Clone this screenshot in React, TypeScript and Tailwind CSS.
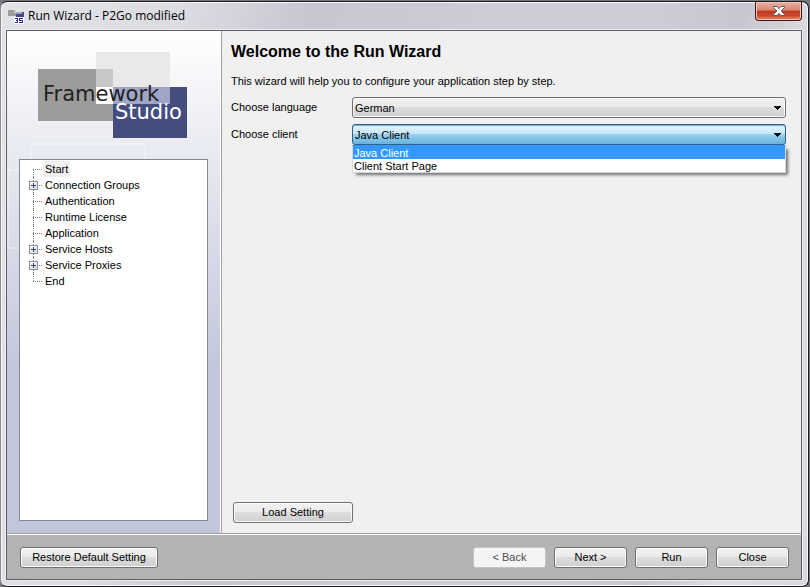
import { useState, type ReactNode } from "react";

type Node = { label: string; expandable?: boolean };

const nodes: Node[] = [
  { label: "Start" },
  { label: "Connection Groups", expandable: true },
  { label: "Authentication" },
  { label: "Runtime License" },
  { label: "Application" },
  { label: "Service Hosts", expandable: true },
  { label: "Service Proxies", expandable: true },
  { label: "End" },
];

const clients = ["Java Client", "Client Start Page"];

function AppIcon() {
  return (
    <svg width="16" height="16" viewBox="0 0 16 16" shapeRendering="crispEdges" aria-hidden="true">
      <rect x="0" y="2" width="8" height="6" fill="#9b9b9b" />
      <rect x="6" y="0" width="8" height="4" fill="#e6e6e8" />
      <rect x="6" y="2" width="2" height="3" fill="#c8c8c8" />
      <rect x="8" y="4" width="8" height="5" fill="#444d7d" />
      <rect x="8" y="4" width="6" height="2" fill="#a0a4c6" />
      <rect x="6" y="9" width="10" height="7" fill="#fff" />
      <path d="M7 10h3v5h-3v-1h2v-1h-1v-1h1v-1h-2zM11 10h4v1h-3v1h3v3h-4v-1h3v-1h-3z" fill="#2e3a78" />
    </svg>
  );
}

function Logo() {
  return (
    <svg width="150" height="86" viewBox="0 0 150 86" role="img" aria-label="Framework Studio">
      <rect x="0" y="17" width="75" height="52" fill="#9c9c9a" />
      <rect x="58" y="0" width="74" height="52" fill="#e9e9e9" />
      <rect x="58" y="17" width="17" height="18" fill="#c8c8c8" />
      <rect x="58" y="35" width="17" height="17" fill="#fff" />
      <rect x="75" y="35" width="74" height="51" fill="#444d7d" />
      <rect x="75" y="35" width="57" height="17" fill="#a0a4c6" />
      <text x="5" y="49" fontSize="21" fill="#222" className="font-['DejaVu_Sans',sans-serif]">
        Framework
      </text>
      <text x="77" y="67" fontSize="21" fill="#fff" className="font-['DejaVu_Sans',sans-serif]">
        Studio
      </text>
    </svg>
  );
}

function PushButton({ children, className = "" }: { children: ReactNode; className?: string }) {
  return (
    <button
      type="button"
      className={`h-[21px] rounded-[3px] border border-[#707070] bg-[linear-gradient(#f2f2f2_0%,#ebebeb_48%,#dddddd_50%,#cfcfcf_100%)] pb-px text-center leading-[18px] shadow-[inset_0_0_0_1px_#fafafa] ${className}`}
    >
      {children}
    </button>
  );
}

function Arrow() {
  return (
    <svg
      width="7"
      height="4"
      viewBox="0 0 7 4"
      shapeRendering="crispEdges"
      aria-hidden="true"
      className="pointer-events-none absolute top-[9px] right-[5px]"
    >
      <path d="M0 0h7v1h-1v1h-1v1h-1v1h-1v-1h-1v-1h-1v-1h-1z" fill="#000" />
    </svg>
  );
}

function TreeRow({ node, first, last }: { node: Node; first: boolean; last: boolean }) {
  return (
    <li className="relative flex h-4 items-center pl-[23px]">
      <span
        className={`absolute left-[13px] border-l border-dotted border-[#808080] ${
          first ? "top-2 bottom-0" : last ? "top-0 bottom-2" : "top-0 bottom-0"
        }`}
      />
      <span className="absolute top-2 left-[13px] w-[9px] border-t border-dotted border-[#808080]" />
      {node.expandable && (
        <button
          type="button"
          aria-label={`Expand ${node.label}`}
          className="absolute top-1 left-[9px] flex size-[9px] items-center justify-center border border-[#919191] bg-linear-to-br from-white to-[#d8d8d8]"
        >
          <svg width="5" height="5" viewBox="0 0 5 5" shapeRendering="crispEdges" aria-hidden="true" className="shrink-0">
            <path d="M2 0h1v2h2v1h-2v2h-1v-2h-2v-1h2z" fill="#2a4a94" />
          </svg>
        </button>
      )}
      <span className={`px-[2px] leading-4 ${first ? "bg-[#f0f0f0]" : ""}`}>{node.label}</span>
    </li>
  );
}

export default function App() {
  const [language, setLanguage] = useState("German");
  const [client, setClient] = useState("Java Client");

  return (
    <div className="flex min-h-screen flex-col bg-[#77777b] pt-px pr-px font-['Liberation_Sans',Arial,sans-serif] text-[11px] text-black">
      <div className="flex flex-1 flex-col rounded-[7px] border border-l-[#8c8c90] border-[#1c1c1e] bg-[linear-gradient(100deg,#e2e3e8_0%,#dcdde3_20%,#c6c7d1_34%,#cbccd6_52%,#cdced8_70%,#c6c7d0_82%,#dcdde2_90%,#d8d9df_100%)] pr-[6px] pb-[6px] pl-[5px] shadow-[inset_0_0_0_1px_#f8f8fa]">
        <header className="flex h-7 items-start justify-between pl-[2px]">
          <div className="flex items-center gap-1 pt-[5px]">
            <AppIcon />
            <h1 className="font-['Open_Sans','Noto_Sans',sans-serif] text-[12px] leading-[18px]">
              Run Wizard - P2Go modified
            </h1>
          </div>
          <button
            type="button"
            aria-label="Close window"
            className="flex h-[19px] w-[47px] items-center justify-center rounded-b-[4px] border border-t-0 border-[#43141a] bg-[linear-gradient(#eab0a2_0%,#d98573_45%,#bf3a20_50%,#c9472a_75%,#e5906c_100%)] shadow-[inset_0_0_0_1px_#f3c4b8]"
          >
            <svg width="12" height="10" viewBox="0 0 12 10" aria-hidden="true">
              <path
                d="M0.5 0.5H4L6 2.6L8 0.5H11.5V1.5L8.2 5L11.5 8.5V9.5H8L6 7.4L4 9.5H0.5V8.5L3.8 5L0.5 1.5Z"
                fill="#fff"
                stroke="#54586c"
              />
            </svg>
          </button>
        </header>

        <main className="flex flex-1 flex-col border border-[#5e5e66] bg-[#f0f0f0] shadow-[0_0_0_1px_#ececf1]">
          <div className="flex flex-1">
            <aside className="relative flex w-[215px] shrink-0 flex-col border-r border-[#a0a0a0] bg-[linear-gradient(#ffffff_0%,#c1c6da_68%)] px-3 pb-3">
              <div className="absolute top-[112px] left-[23px] h-10 w-[116px] border-2 border-white/30" />
              <div className="absolute top-[138px] left-0 h-20 w-10 border-2 border-white/30" />
              <div className="absolute inset-y-0 right-0 w-px bg-white" />
              <div className="h-[128px] pt-[21px] pl-[19px]">
                <Logo />
              </div>
              <ul className="relative mr-px flex-1 border border-[#828790] bg-white py-px">
                {nodes.map((node, i) => (
                  <TreeRow key={node.label} node={node} first={i === 0} last={i === nodes.length - 1} />
                ))}
              </ul>
            </aside>

            <section className="flex flex-1 flex-col pt-[11px] pr-[15px] pb-[10px] pl-[9px]">
              <h2 className="text-[16px] leading-5 font-bold">Welcome to the Run Wizard</h2>
              <p className="mt-[11px] leading-4">This wizard will help you to configure your application step by step.</p>

              <div className="mt-2 grid grid-cols-[121px_1fr] gap-y-[6px]">
                <label htmlFor="language" className="leading-5">
                  Choose language
                </label>
                <div className="relative h-[21px]">
                  <select
                    id="language"
                    value={language}
                    onChange={(e) => setLanguage(e.target.value)}
                    className="h-full w-full appearance-none rounded-[3px] border border-[#707070] bg-[linear-gradient(#f2f2f2_0%,#ebebeb_48%,#dddddd_50%,#cfcfcf_100%)] pt-px pl-[2px] shadow-[inset_0_0_0_1px_#fafafa]"
                  >
                    <option>German</option>
                    <option>English</option>
                  </select>
                  <Arrow />
                </div>

                <label htmlFor="client" className="leading-5">
                  Choose client
                </label>
                <div className="relative h-[21px]">
                  <select
                    id="client"
                    value={client}
                    onChange={(e) => setClient(e.target.value)}
                    className="h-full w-full appearance-none rounded-[3px] border border-[#2c628b] bg-[linear-gradient(#e5f4fc_0%,#c4e5f6_48%,#98d1ef_50%,#68b3db_100%)] pt-px pl-[2px] shadow-[inset_0_1px_0_#86a9c0]"
                  >
                    {clients.map((c) => (
                      <option key={c}>{c}</option>
                    ))}
                  </select>
                  <Arrow />
                  <ul
                    role="listbox"
                    aria-label="Choose client"
                    className="absolute inset-x-0 top-[21px] border border-[#d4d8e4] border-t-[#3399ff] bg-white shadow-[3px_3px_3px_-1px_#707070]"
                  >
                    {clients.map((c) => (
                      <li
                        key={c}
                        role="option"
                        aria-selected={c === client}
                        onClick={() => setClient(c)}
                        className={`h-[13px] pl-[1px] leading-[15px] ${c === client ? "bg-[#3399ff] text-white" : ""}`}
                      >
                        {c}
                      </li>
                    ))}
                  </ul>
                </div>
              </div>

              <PushButton className="mt-auto ml-[2px] w-[120px]">Load Setting</PushButton>
            </section>
          </div>

          <footer className="flex items-center border-t border-[#a0a0a0] bg-[#b3b3b3] pt-[13px] pr-3 pb-[11px] pl-[13px] shadow-[inset_0_1px_0_#ffffff]">
            <PushButton className="w-[138px]">Restore Default Setting</PushButton>
            <div className="ml-auto flex gap-2">
              <button
                type="button"
                disabled
                className="h-[21px] w-[73px] rounded-[3px] border border-[#c4c4c4] bg-[#f4f4f4] pb-px text-center leading-[18px] text-[#4c4c4c]"
              >
                &lt; Back
              </button>
              <PushButton className="w-[73px]">Next &gt;</PushButton>
              <PushButton className="w-[73px]">Run</PushButton>
              <PushButton className="w-[73px]">Close</PushButton>
            </div>
          </footer>
        </main>
      </div>
    </div>
  );
}
